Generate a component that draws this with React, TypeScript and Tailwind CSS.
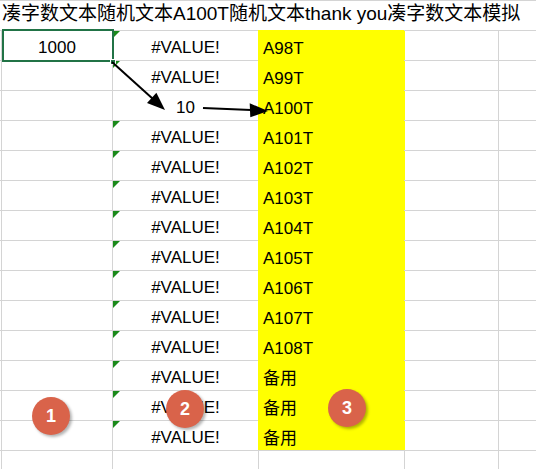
import React from "react";

const font = "font-['Liberation_Sans','Noto_Sans_CJK_SC',sans-serif]";

const colB = [
  "#VALUE!", "#VALUE!", "10", "#VALUE!", "#VALUE!", "#VALUE!", "#VALUE!",
  "#VALUE!", "#VALUE!", "#VALUE!", "#VALUE!", "#VALUE!", "#VALUE!", "#VALUE!",
];

const colC = [
  "A98T", "A99T", "A100T", "A101T", "A102T", "A103T", "A104T",
  "A105T", "A106T", "A107T", "A108T", "备用", "备用", "备用",
];

function Flag() {
  // kleines grünes Dreieck (Fehlerhinweis)
  return (
    <svg className="absolute left-0 top-0" width="7" height="7" viewBox="0 0 7 7">
      <polygon points="0,0 7,0 0,7" fill="#1a8a1a" />
    </svg>
  );
}

function Badge({ n, className }: { n: number; className: string }) {
  return (
    <div
      className={
        "absolute w-[38px] h-[38px] rounded-full bg-[#d9634a] text-white font-bold text-[18px] flex items-center justify-center shadow-[2px_2px_3px_rgba(0,0,0,0.3)] " +
        className
      }
    >
      {n}
    </div>
  );
}

export default function App() {
  return (
    <div className={`relative w-[536px] h-[469px] overflow-hidden bg-white text-black ${font}`}>
      {/* Titelzeile */}
      <div className="h-[30px] border-t border-[#d4d4d4] pl-[2px] pt-[2px] text-[19px] leading-[22px] whitespace-nowrap">
        凑字数文本随机文本A100T随机文本thank you凑字数文本模拟
      </div>

      {/* Tabellenzeilen */}
      {colC.map((c, i) => (
        <div key={i} className="flex h-[30px] pl-[1px] border-t border-[#d4d4d4] text-[17px]">
          <div className="w-[111px] border-l border-[#d4d4d4] text-center pt-[5px] leading-[23px]">
            {i === 0 ? "1000" : ""}
          </div>
          <div className="relative w-[146px] border-l border-[#d4d4d4] text-center pt-[5px] leading-[23px]">
            {colB[i] !== "10" && <Flag />}
            {colB[i]}
          </div>
          <div className="w-[146px] -mt-px h-[30px] border-t border-l border-[#ffff00] bg-[#ffff00] pl-[4px] pt-[6px] leading-[23px]">
            {c}
          </div>
          <div className="w-[94px] border-l border-[#ffff00]" />
          <div className="flex-1 border-l border-[#d4d4d4]" />
        </div>
      ))}
      <div className="flex h-[30px] pl-[1px] border-t border-[#d4d4d4]">
        <div className="w-[111px] border-l border-[#d4d4d4]" />
        <div className="w-[146px] border-l border-[#d4d4d4]" />
        <div className="w-[146px] border-l border-[#d4d4d4]" />
        <div className="w-[94px] border-l border-[#d4d4d4]" />
        <div className="flex-1 border-l border-[#d4d4d4]" />
      </div>

      {/* Auswahlrahmen */}
      <div className="absolute left-[2px] top-[29px] w-[112px] h-[33px] border-2 border-[#217346]" />
      <div className="absolute left-[110px] top-[59px] w-[6px] h-[6px] bg-[#217346] border border-white" />

      {/* Pfeile */}
      <svg className="absolute left-0 top-0" width="536" height="469">
        <line x1="112" y1="62" x2="153" y2="99" stroke="#000" strokeWidth="2" />
        <polygon points="165,110 156.4,92.7 147,103.1" fill="#000" />
        <line x1="203" y1="108" x2="251" y2="110" stroke="#000" strokeWidth="2" />
        <polygon points="268,111 249.7,103.2 250.3,117.2" fill="#000" />
      </svg>

      <Badge n={1} className="left-[32px] top-[397px]" />
      <Badge n={2} className="left-[166px] top-[390px]" />
      <Badge n={3} className="left-[328px] top-[389px]" />
    </div>
  );
}
